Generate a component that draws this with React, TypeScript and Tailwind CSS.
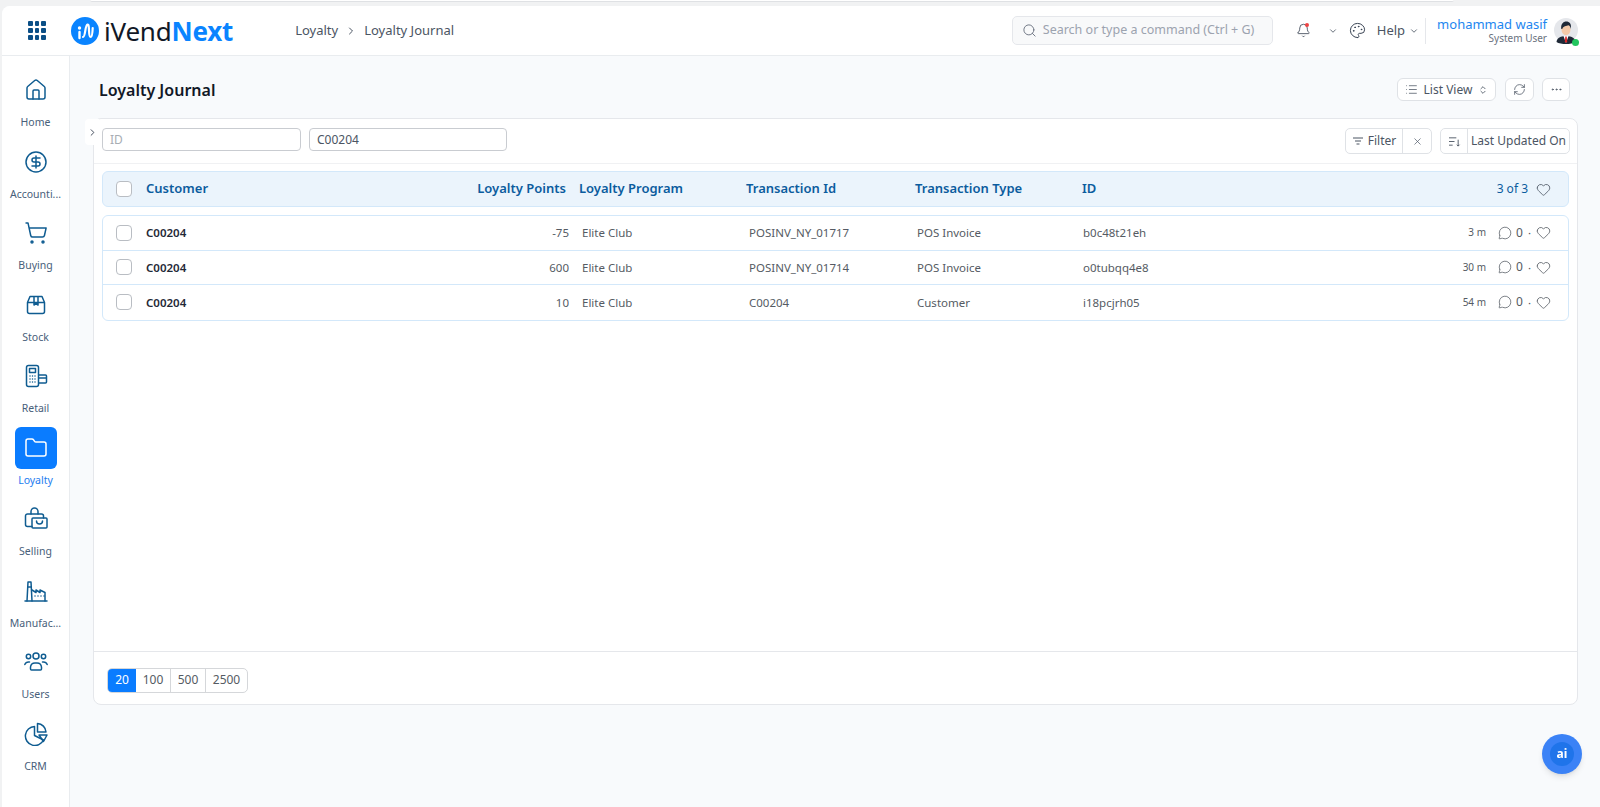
import { ChevronDown, ChevronRight, ChevronsUpDown, Heart, List, MessageCircle, RefreshCw, Search, X, Bell, Palette, MoreHorizontal, House, CircleDollarSign, ShoppingCart, Folder } from "lucide-react";
import type { ReactNode } from "react";

const iconClass = "w-[24px] h-[24px] text-[#0f5c91]";

// sidebar icons the icon package has no close match for
const BoxIcon = () => (
  <svg viewBox="0 0 24 24" fill="none" stroke="currentColor" strokeWidth="1.5" strokeLinejoin="round" className={iconClass}>
    <path d="M3.5 9.5 6 3.5h12l2.5 6v9a2 2 0 0 1-2 2h-13a2 2 0 0 1-2-2z" />
    <path d="M3.5 9.5h17M10 3.5v8.5l2-1.3 2 1.3V3.5" />
  </svg>
);

const PosIcon = () => (
  <svg viewBox="0 0 24 24" fill="none" stroke="currentColor" strokeWidth="1.5" strokeLinejoin="round" className={iconClass}>
    <rect x="2.5" y="1.5" width="12" height="21" rx="2" />
    <rect x="5.5" y="4.5" width="6" height="4" />
    <path d="M6 12h.01M8.5 12h.01M11 12h.01M6 15h.01M8.5 15h.01M11 15h.01M6 18h.01M8.5 18h.01M11 18h.01" strokeLinecap="round" />
    <path d="M14.5 11h7a1 1 0 0 1 1 1v6a1 1 0 0 1-1 1h-7M14.5 14h8" />
  </svg>
);

const BagIcon = () => (
  <svg viewBox="0 0 24 24" fill="none" stroke="currentColor" strokeWidth="1.5" strokeLinejoin="round" strokeLinecap="round" className={iconClass}>
    <path d="M7 7V4.5a3.5 3.5 0 0 1 7 0V7" />
    <path d="M8 19.5H3.5a2 2 0 0 1-2-2V9a2 2 0 0 1 2-2h14a2 2 0 0 1 2 2v2" />
    <rect x="8" y="11" width="15" height="10" rx="1" />
    <path d="M12.5 14a3 3 0 0 0 6 0" />
  </svg>
);

const FactoryIcon = () => (
  <svg viewBox="0 0 24 24" fill="none" stroke="currentColor" strokeWidth="1.5" strokeLinejoin="round" strokeLinecap="round" className={iconClass}>
    <path d="M1 22h22" />
    <path d="M3 22 4 3h3l1 19" />
    <path d="M4 8h3" />
    <path d="M8 11l4 2.5V11l4 2.5V11l5 2.5V22" />
    <path d="M11 17h.01M14 17h.01M17 17h.01M20 17h.01" />
  </svg>
);

const PeopleIcon = () => (
  <svg viewBox="0 0 24 24" fill="none" stroke="currentColor" strokeWidth="1.5" strokeLinecap="round" className={iconClass}>
    <circle cx="12" cy="6" r="3" />
    <circle cx="4.5" cy="6.5" r="2.2" />
    <circle cx="19.5" cy="6.5" r="2.2" />
    <path d="M6.5 19v-2a4.5 4.5 0 0 1 4.5-4h2a4.5 4.5 0 0 1 4.5 4v2a1 1 0 0 1-1 1h-9a1 1 0 0 1-1-1z" />
    <path d="M.8 14.5a4 4 0 0 1 3.7-2.5h1M23.2 14.5a4 4 0 0 0-3.7-2.5h-1" />
  </svg>
);

const PieIcon = () => (
  <svg viewBox="0 0 24 24" fill="none" stroke="currentColor" strokeWidth="1.5" strokeLinejoin="round" className={iconClass}>
    <path d="M10.5 4.5a9.5 9.5 0 1 0 9 13.5l-9-4.5z" />
    <path d="M13.5 1.5a9 9 0 0 1 8.500 8.500h-8.500z" />
    <path d="M15 13h8l-3.500 6.500z" />
  </svg>
);

const navItems: { label: string; icon: ReactNode; active?: boolean }[] = [
  { label: "Home", icon: <House className={iconClass} strokeWidth={1.5} /> },
  { label: "Accounti...", icon: <CircleDollarSign className={iconClass} strokeWidth={1.5} /> },
  { label: "Buying", icon: <ShoppingCart className={iconClass} strokeWidth={1.5} /> },
  { label: "Stock", icon: <BoxIcon /> },
  { label: "Retail", icon: <PosIcon /> },
  { label: "Loyalty", icon: <Folder className="w-[24px] h-[24px] text-white" strokeWidth={1.5} />, active: true },
  { label: "Selling", icon: <BagIcon /> },
  { label: "Manufac...", icon: <FactoryIcon /> },
  { label: "Users", icon: <PeopleIcon /> },
  { label: "CRM", icon: <PieIcon /> },
];

const rows = [
  { customer: "C00204", points: "-75", program: "Elite Club", txn: "POSINV_NY_01717", type: "POS Invoice", id: "b0c48t21eh", ago: "3 m" },
  { customer: "C00204", points: "600", program: "Elite Club", txn: "POSINV_NY_01714", type: "POS Invoice", id: "o0tubqq4e8", ago: "30 m" },
  { customer: "C00204", points: "10", program: "Elite Club", txn: "C00204", type: "Customer", id: "i18pcjrh05", ago: "54 m" },
];

const Logo = () => (
  <svg viewBox="0 0 28 28" className="w-[28px] h-[28px] shrink-0">
    <circle cx="14" cy="14" r="14" fill="#0a84ff" />
    <circle cx="8.500" cy="11" r="1.700" fill="#fff" />
    <path d="M8.500 15v6" stroke="#fff" strokeWidth="2.400" strokeLinecap="round" />
    <path d="M12 20c2.500 0 2-12 4.500-12.500S17 20 19.500 20c1.500 0 2-3 2.200-9" fill="none" stroke="#fff" strokeWidth="2.200" strokeLinecap="round" />
  </svg>
);

const Avatar = () => (
  <svg viewBox="0 0 24 26" className="w-[24px] h-[26px]">
    <circle cx="12" cy="12" r="12" fill="#e5e7eb" />
    <path d="M2.500 24c.5-4 3-5.500 9.500-6 6.500.5 9 2 9.500 6-2 1.500-6 2-9.500 2s-7.500-.5-9.500-2z" fill="#1f2937" />
    <path d="M9.500 18h5L12 25z" fill="#fff" />
    <path d="M11.300 18.500h1.400l.5 5-1.200 1.500-1.200-1.500z" fill="#dc2626" />
    <ellipse cx="12" cy="11.500" rx="4.500" ry="5.800" fill="#f3c9a8" />
    <path d="M7.300 11c-.8-5 2-7.500 5-7.500s5.600 2.200 4.400 7.500c-.3-2-1-3.200-2.200-3.700-2 .8-5.500.6-6.200 3.700z" fill="#1f2937" />
  </svg>
);

const Checkbox = () => (
  <span className="block w-[16px] h-[16px] rounded-[4px] border border-[#b9bdc3] bg-white shrink-0" />
);

export default function App() {
  return (
    <div className="h-screen w-full overflow-hidden flex flex-col bg-[#f1f2f3] font-['Noto_Sans',sans-serif]">
      <div className="h-[6px] shrink-0 pl-[90px]">
        <div className="w-[1364px] h-[2px] bg-white border-b border-[#dfe1e4] rounded-b" />
      </div>

      <div className="flex-1 min-h-0 ml-[2px] flex flex-col bg-[#f8fafc] rounded-tl-lg overflow-hidden">
        <header className="h-[50px] shrink-0 bg-white border-b border-[#e9ecef] flex items-center">
          <div className="grid grid-cols-3 gap-[2px] ml-[26px] w-[18px]">
            {Array.from({ length: 9 }).map((_, i) => (
              <span key={i} className="h-[5px] rounded-[1px] bg-[#0b4f86]" />
            ))}
          </div>
          <div className="ml-[25px] flex items-center gap-[5px]">
            <Logo />
            <span className="text-[26px] leading-none text-[#111827] tracking-[-0.2px]">
              iVend<span className="font-bold text-[#0a84ff]">Next</span>
            </span>
          </div>
          <nav className="ml-[62px] flex items-center text-[13px] text-[#4b5563]">
            <span>Loyalty</span>
            <ChevronRight className="w-[12px] h-[12px] mx-[7px]" />
            <span>Loyalty Journal</span>
          </nav>

          <div className="ml-auto w-[261px] h-[29px] flex items-center gap-[6px] px-[9px] bg-[#f8f9fa] border border-[#e5e7eb] rounded-[5px] text-[#9ca3af] text-[12.500px]">
            <Search className="w-[15px] h-[15px] text-[#6b7280]" strokeWidth={1.5} />
            <span>Search or type a command (Ctrl + G)</span>
          </div>

          <div className="relative ml-[23px]">
            <Bell className="w-[15px] h-[15px] text-[#374151]" strokeWidth={1.3} />
            <span className="absolute top-0 right-[2px] w-[4px] h-[4px] rounded-full bg-[#ef4444]" />
          </div>
          <ChevronDown className="ml-[17px] w-[10px] h-[10px] text-[#4b5563]" />
          <Palette className="ml-[11px] w-[17px] h-[17px] text-[#374151]" strokeWidth={1.4} />
          <span className="ml-[11px] text-[13px] text-[#4b5563]">Help</span>
          <ChevronDown className="ml-[4px] w-[10px] h-[10px] text-[#4b5563]" />
          <span className="ml-[6px] w-px h-[26px] bg-[#e5e7eb]" />
          <div className="ml-[11px] flex flex-col items-end">
            <span className="text-[13px] leading-[16px] text-[#1d86f0]">mohammad wasif</span>
            <span className="text-[10px] leading-[13px] text-[#6b7280]">System User</span>
          </div>
          <div className="relative ml-[7px] mr-[22px]">
            <Avatar />
            <span className="absolute -bottom-[2px] right-[-1px] w-[7px] h-[7px] rounded-full bg-[#22c55e]" />
          </div>
        </header>

        <div className="flex-1 min-h-0 flex">
          <aside className="w-[68px] shrink-0 bg-white border-r border-[#e9ecef] pt-[13px] flex flex-col">
            {navItems.map((item) => (
              <div key={item.label} className="h-[71.500px] flex flex-col items-center">
                <div className={`w-[42px] h-[42px] rounded-[6px] flex items-center justify-center ${item.active ? "bg-[#0a7cff]" : ""}`}>
                  {item.icon}
                </div>
                <span className={`mt-[4px] text-[10.500px] leading-[14px] ${item.active ? "text-[#1d7df0]" : "text-[#48607a]"}`}>
                  {item.label}
                </span>
              </div>
            ))}
          </aside>

          <main className="flex-1 min-w-0 pl-[23px] pr-[22px]">
            <div className="h-[62px] flex items-center justify-between pl-[6px] pr-[8px] pt-[5px]">
              <h1 className="text-[16px] font-semibold text-[#111827]">Loyalty Journal</h1>
              <div className="flex items-center">
                <div className="w-[99px] h-[23px] flex items-center justify-center gap-[6px] bg-white border border-[#dfe2e6] rounded-[6px] text-[12px] text-[#4b5563]">
                  <List className="w-[13px] h-[13px]" strokeWidth={1.4} />
                  <span>List View</span>
                  <ChevronsUpDown className="w-[10px] h-[10px]" />
                </div>
                <div className="ml-[9px] w-[29px] h-[23px] flex items-center justify-center bg-white border border-[#dfe2e6] rounded-[6px] text-[#4b5563]">
                  <RefreshCw className="w-[13px] h-[13px]" strokeWidth={1.4} />
                </div>
                <div className="ml-[8px] w-[28px] h-[23px] flex items-center justify-center bg-white border border-[#dfe2e6] rounded-[6px] text-[#4b5563]">
                  <MoreHorizontal className="w-[13px] h-[13px]" strokeWidth={1.6} />
                </div>
              </div>
            </div>

            <section className="relative h-[587px] flex flex-col bg-white border border-[#e5e7eb] rounded-[8px]">
              <div className="absolute top-0 -left-[9px] w-[14px] h-[26px] bg-white rounded-l-[4px] flex items-center justify-center">
                <ChevronRight className="w-[11px] h-[11px] text-[#374151]" strokeWidth={2} />
              </div>

              <div className="h-[45px] shrink-0 border-b border-[#f0f1f3] flex items-start pt-[9px] pl-[8px] pr-[7px]">
                <div className="w-[199px] h-[23px] flex items-center px-[7px] border border-[#c9ccd1] rounded-[4px] text-[12px] text-[#a8adb4]">ID</div>
                <div className="ml-[8px] w-[198px] h-[23px] flex items-center px-[7px] border border-[#c9ccd1] rounded-[4px] text-[12px] text-[#4b5563]">C00204</div>
                <div className="ml-auto flex h-[26px] w-[87px] border border-[#dfe2e6] rounded-[5px] text-[12px] text-[#4b5563]">
                  <div className="flex-1 flex items-center justify-center gap-[4px] border-r border-[#dfe2e6]">
                    <svg viewBox="0 0 12 10" className="w-[12px] h-[10px]" fill="none" stroke="currentColor" strokeWidth="1">
                      <path d="M1 2h10M3 5h6M4.500 8h3" />
                    </svg>
                    <span>Filter</span>
                  </div>
                  <div className="w-[28px] flex items-center justify-center">
                    <X className="w-[11px] h-[11px]" strokeWidth={1.5} />
                  </div>
                </div>
                <div className="ml-[8px] flex h-[26px] w-[130px] border border-[#dfe2e6] rounded-[5px] text-[12px] text-[#4b5563]">
                  <div className="w-[27px] flex items-center justify-center border-r border-[#dfe2e6]">
                    <svg viewBox="0 0 14 12" className="w-[13px] h-[11px]" fill="none" stroke="currentColor" strokeWidth="1">
                      <path d="M1 2h8M1 6h6M1 10h4M11 4v7M9.500 9.500 11 11l1.500-1.500" />
                    </svg>
                  </div>
                  <div className="flex-1 flex items-center justify-center whitespace-nowrap">Last Updated On</div>
                </div>
              </div>

              <div className="h-[36px] mt-[7px] mx-[8px] shrink-0 flex items-center bg-[#ebf4fc] border border-[#d3e8fa] rounded-[6px] text-[13px] font-semibold text-[#0b5c9e]">
                <span className="ml-[13px]"><Checkbox /></span>
                <span className="ml-[14px] w-[320px]">Customer</span>
                <span className="w-[100px] text-right whitespace-nowrap">Loyalty Points</span>
                <span className="ml-[13px] w-[167px] whitespace-nowrap">Loyalty Program</span>
                <span className="w-[169px] whitespace-nowrap">Transaction Id</span>
                <span className="w-[167px] whitespace-nowrap">Transaction Type</span>
                <span>ID</span>
                <span className="ml-auto font-normal text-[12px] whitespace-nowrap">3 of 3</span>
                <Heart className="ml-[8px] mr-[17px] w-[15px] h-[15px] text-[#4b5563]" strokeWidth={1.3} />
              </div>

              <div className="mt-[8px] mx-[8px] shrink-0 border border-[#d3e8fa] rounded-[6px] divide-y divide-[#d3e8fa]">
                {rows.map((row) => (
                  <div key={row.id} className="h-[34.500px] flex items-center text-[11.500px] text-[#555b63]">
                    <span className="ml-[13px]"><Checkbox /></span>
                    <span className="ml-[14px] w-[320px] font-semibold text-[#1f2937]">{row.customer}</span>
                    <span className="w-[103px] text-right">{row.points}</span>
                    <span className="ml-[13px] w-[167px]">{row.program}</span>
                    <span className="w-[168px]">{row.txn}</span>
                    <span className="w-[166px]">{row.type}</span>
                    <span>{row.id}</span>
                    <span className="ml-auto text-[10px] whitespace-nowrap">{row.ago}</span>
                    <MessageCircle className="ml-[12px] w-[14px] h-[14px]" strokeWidth={1.3} />
                    <span className="ml-[4px] text-[12px]">0</span>
                    <span className="mx-[5px]">·</span>
                    <Heart className="mr-[17px] w-[15px] h-[15px]" strokeWidth={1.3} />
                  </div>
                ))}
              </div>

              <div className="mt-auto h-[53px] shrink-0 border-t border-[#e5e7eb] pl-[13px] pt-[14px]">
                <div className="inline-flex h-[25px] border border-[#d5d7da] rounded-[5px] text-[12px] text-[#555b63] overflow-hidden">
                  <span className="w-[28px] flex items-center justify-center bg-[#0a7cff] text-white">20</span>
                  <span className="w-[35px] flex items-center justify-center border-r border-[#d5d7da]">100</span>
                  <span className="w-[35px] flex items-center justify-center border-r border-[#d5d7da]">500</span>
                  <span className="w-[41px] flex items-center justify-center">2500</span>
                </div>
              </div>
            </section>
          </main>
        </div>
      </div>

      <div className="fixed left-[1542px] top-[734px] w-[40px] h-[40px] rounded-full bg-[#3b82f6] shadow-md flex items-center justify-center">
        <span className="w-[24px] h-[24px] rounded-full bg-[#1f74ea] flex items-center justify-center text-[12px] font-bold text-white leading-none">ai</span>
      </div>
    </div>
  );
}
